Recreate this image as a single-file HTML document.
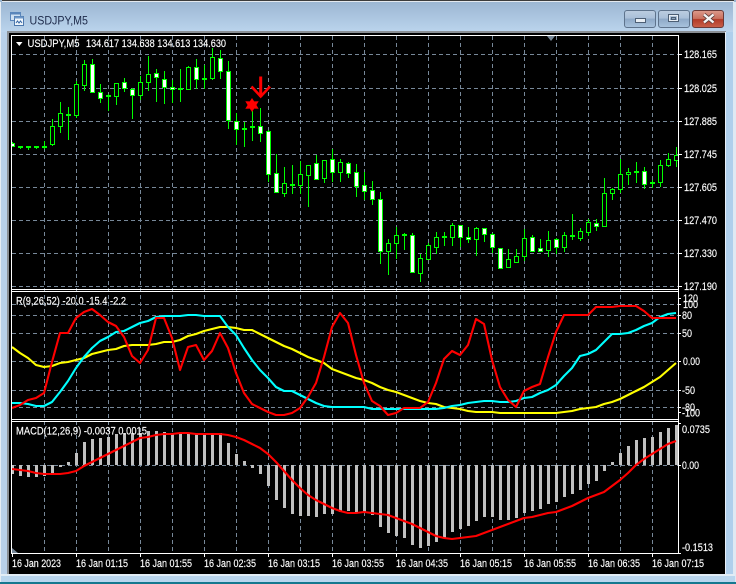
<!DOCTYPE html>
<html><head><meta charset="utf-8"><title>USDJPY,M5</title>
<style>
html,body{margin:0;padding:0;background:#000;width:736px;height:584px;overflow:hidden}
svg{display:block;position:absolute;left:0;top:0}
text{font-family:"Liberation Sans",sans-serif;font-size:11px;fill:#fff;stroke:#fff;stroke-width:.15px}
</style></head><body>
<svg width="736" height="584" viewBox="0 0 736 584" xmlns="http://www.w3.org/2000/svg">
<defs>
<linearGradient id="tb" x1="0" y1="0" x2="0" y2="1"><stop offset="0" stop-color="#9ab5d1"/><stop offset="1" stop-color="#bbd4ed"/></linearGradient>
<linearGradient id="btn" x1="0" y1="0" x2="0" y2="1"><stop offset="0" stop-color="#bccde0"/><stop offset=".45" stop-color="#a9bfd8"/><stop offset=".5" stop-color="#8ea9c7"/><stop offset="1" stop-color="#a9c3de"/></linearGradient>
<linearGradient id="cls" x1="0" y1="0" x2="0" y2="1"><stop offset="0" stop-color="#dc9a8c"/><stop offset=".48" stop-color="#c9705e"/><stop offset=".52" stop-color="#b23a28"/><stop offset="1" stop-color="#c9604a"/></linearGradient>
<clipPath id="ch"><rect x="12" y="36" width="666" height="517"/></clipPath>
</defs>
<!-- frame -->
<rect x="0" y="0" width="736" height="584" fill="#c9dcee"/>
<rect x="0" y="0" width="736" height="32" fill="url(#tb)"/>
<rect x="2" y="0" width="732" height="1" fill="#3c3c3c"/>
<rect x="2" y="1" width="732" height="1" fill="#e4e9ef"/>
<rect x="0" y="2" width="1" height="580" fill="#e6edf4"/>
<rect x="1" y="32" width="6" height="550" fill="#b9d1ea"/>
<rect x="726" y="32" width="7" height="550" fill="#afcfec"/>
<rect x="733" y="2" width="3" height="580" fill="#dfe9f3"/>
<rect x="7" y="31" width="719" height="2" fill="#8a8f95"/>
<rect x="7" y="31" width="2" height="543" fill="#8a8f95"/>
<rect x="9" y="33" width="716" height="541" fill="#000"/>
<rect x="725" y="32" width="1" height="543" fill="#e8f0f8"/>
<rect x="1" y="574" width="734" height="2" fill="#e2edf6"/>
<rect x="1" y="576" width="734" height="6" fill="#b9d6ee"/>
<rect x="0" y="582" width="736" height="2" fill="#15788f"/>
<!-- title -->
<g shape-rendering="crispEdges">
<rect x="10.500" y="12.500" width="10" height="8" fill="#cfe0f2" stroke="#5a86bb"/>
<rect x="10.500" y="12.500" width="10" height="2" fill="#5a86bb"/>
<rect x="14.500" y="16.500" width="9" height="9" fill="#eef5fb" stroke="#4d78ad"/>
<rect x="14.500" y="16.500" width="9" height="2" fill="#6d97c8"/>
</g>
<path d="M16 23l1.500-2 1.500 2 1.500-2 1.500 2" fill="none" stroke="#3567a5"/>
<text x="29.500" y="24.500" textLength="58.500" lengthAdjust="spacingAndGlyphs" style="font-size:12px;fill:#1d2a4a;stroke:none">USDJPY,M5</text>
<!-- buttons -->
<rect x="624.500" y="10.500" width="31" height="17" rx="2.500" fill="url(#btn)" stroke="#5e738c"/>
<rect x="635.500" y="18.500" width="10" height="4" fill="#e8eef4" stroke="#4d5f75"/>
<rect x="658.500" y="10.500" width="31" height="17" rx="2.500" fill="url(#btn)" stroke="#5e738c"/>
<rect x="668.500" y="14.500" width="10" height="7" fill="none" stroke="#4d5f75" stroke-width="1"/>
<rect x="669.500" y="15.500" width="8" height="5" fill="none" stroke="#e8eef4"/>
<rect x="671.500" y="17.500" width="4" height="2" fill="#8ca3bc" stroke="#4d5f75"/>
<rect x="692.500" y="10.500" width="31" height="17" rx="2.500" fill="url(#cls)" stroke="#6b3a38"/>
<path d="M704 14.500l9.500 8M713.500 14.500l-9.500 8" stroke="#5b3a38" stroke-width="4"/>
<path d="M704 14.500l9.500 8M713.500 14.500l-9.500 8" stroke="#f4f4f4" stroke-width="2.400"/>

<!-- grid -->
<g stroke="#778899" stroke-width="1" shape-rendering="crispEdges" fill="none" stroke-dasharray="4 3">
<path d="M44.500 36V553M76.500 36V553M108.500 36V553M140.500 36V553M172.500 36V553M204.500 36V553M236.500 36V553M268.500 36V553M300.500 36V553M332.500 36V553M364.500 36V553M396.500 36V553M428.500 36V553M460.500 36V553M492.500 36V553M524.500 36V553M556.500 36V553M588.500 36V553M620.500 36V553M652.500 36V553"/>
<path d="M12 54.500H678M12 88.500H678M12 121.500H678M12 154.500H678M12 187.500H678M12 220.500H678M12 253.500H678M12 286.500H678M12 304.500H678M12 315.500H678M12 333.500H678M12 361.500H678M12 390.500H678M12 407.500H678M12 465.500H678"/>
</g>
<g clip-path="url(#ch)">
<!-- candles -->
<g shape-rendering="crispEdges">
<path fill="none" stroke="#0f0" d="M12.500 142V147M20.500 147V149M28.500 147V150M36.500 147V149M44.500 141V149M52.500 119V146M60.500 102V133M68.500 107V140M76.500 81V118M84.500 60V91M92.500 59V92M100.500 84V103M108.500 94V111M116.500 84V105M124.500 78V92M132.500 88V119M140.500 76V100M148.500 56V91M156.500 69V102M164.500 71V104M172.500 80V103M180.500 69V102M188.500 66V90M196.500 59V89M204.500 65V89M212.500 48V80M220.500 50V79M228.500 61V129M236.500 113V145M244.500 122V147M252.500 111V141M260.500 108V142M268.500 130V182M276.500 154V192M284.500 167V197M292.500 165V194M300.500 161V194M308.500 165V207M316.500 155V179M324.500 160V183M332.500 149V182M340.500 159V182M348.500 162V178M356.500 164V197M364.500 172V200M372.500 181V205M380.500 192V264M388.500 239V275M396.500 227V259M404.500 233V250M412.500 233V272M420.500 254V282M428.500 243V259M436.500 232V254M444.500 232V246M452.500 223V246M460.500 225V247M468.500 227V243M476.500 227V256M484.500 228V242M492.500 233V253M500.500 248V268M508.500 249V267M516.500 249V262M524.500 229V261M532.500 235V251M540.500 239V251M548.500 231V257M556.500 238V254M564.500 232V252M572.500 214V240M580.500 228V241M588.500 219V236M596.500 219V231M604.500 178V226M612.500 188V200M620.500 159V193M628.500 168V185M636.500 162V183M644.500 167V189M652.500 180V188M660.500 160V187M668.500 153V167M676.500 147V167"/>
<path fill="#000" stroke="#0f0" d="M50.500 126.500h4v18h-4zM58.500 113.500h4v13h-4zM74.500 84.500h4v31h-4zM82.500 64.500h4v21h-4zM114.500 83.500h4v13h-4zM138.500 82.500h4v13h-4zM146.500 74.500h4v8h-4zM186.500 67.500h4v22h-4zM210.500 57.500h4v21h-4zM282.500 183.500h4v10h-4zM298.500 174.500h4v11h-4zM306.500 165.500h4v10h-4zM322.500 160.500h4v18h-4zM338.500 162.500h4v10h-4zM386.500 243.500h4v8h-4zM394.500 235.500h4v8h-4zM418.500 258.500h4v15h-4zM426.500 245.500h4v14h-4zM434.500 237.500h4v10h-4zM450.500 225.500h4v12h-4zM474.500 228.500h4v11h-4zM506.500 259.500h4v8h-4zM514.500 256.500h4v6h-4zM522.500 238.500h4v18h-4zM546.500 240.500h4v10h-4zM562.500 235.500h4v12h-4zM578.500 231.500h4v7h-4zM586.500 222.500h4v10h-4zM602.500 193.500h4v33h-4zM610.500 189.500h4v4h-4zM618.500 174.500h4v15h-4zM626.500 172.500h4v2h-4zM658.500 165.500h4v17h-4zM666.500 159.500h4v6h-4zM674.500 155.500h4v5h-4z"/>
<path fill="#fff" stroke="#0f0" d="M10.500 143.500h4v3h-4zM90.500 64.500h4v28h-4zM98.500 92.500h4v6h-4zM122.500 82.500h4v6h-4zM130.500 89.500h4v6h-4zM154.500 73.500h4v4h-4zM162.500 79.500h4v8h-4zM170.500 87.500h4v2h-4zM194.500 67.500h4v12h-4zM218.500 58.500h4v13h-4zM226.500 71.500h4v49h-4zM234.500 121.500h4v8h-4zM258.500 126.500h4v7h-4zM266.500 131.500h4v43h-4zM274.500 173.500h4v19h-4zM314.500 163.500h4v16h-4zM330.500 159.500h4v13h-4zM346.500 163.500h4v10h-4zM354.500 172.500h4v14h-4zM362.500 185.500h4v6h-4zM370.500 190.500h4v9h-4zM378.500 199.500h4v52h-4zM410.500 235.500h4v37h-4zM458.500 225.500h4v12h-4zM466.500 237.500h4v2h-4zM482.500 228.500h4v6h-4zM490.500 234.500h4v13h-4zM498.500 248.500h4v20h-4zM530.500 237.500h4v14h-4zM538.500 248.500h4v3h-4zM554.500 239.500h4v8h-4zM594.500 223.500h4v3h-4zM642.500 171.500h4v13h-4z"/>
<path fill="#0f0" d="M18 146h5v2h-5zM26 146h5v2h-5zM34 146h5v2h-5zM42 146h5v2h-5zM66 114h5v2h-5zM106 95h5v2h-5zM178 88h5v2h-5zM202 78h5v2h-5zM242 128h5v2h-5zM250 126h5v2h-5zM290 184h5v2h-5zM402 234h5v2h-5zM442 236h5v2h-5zM570 235h5v2h-5zM634 171h5v2h-5zM650 182h5v2h-5z"/>
</g>
<!-- MACD bars -->
<path shape-rendering="crispEdges" fill="none" stroke="#c0c0c0" stroke-width="3" d="M12.500 465V474M20.500 465V476M28.500 465V477M36.500 465V477M44.500 465V476M52.500 465V473M60.500 465V467M68.500 465V462M76.500 465V453M84.500 465V442M92.500 465V439M100.500 465V438M108.500 465V437M116.500 465V434M124.500 465V433M132.500 465V433M140.500 465V433M148.500 465V431M156.500 465V431M164.500 465V432M172.500 465V433M180.500 465V433M188.500 465V433M196.500 465V433M204.500 465V433M212.500 465V433M220.500 465V433M228.500 465V443M236.500 465V454M244.500 465V461M252.500 465V468M260.500 465V474M268.500 465V486M276.500 465V500M284.500 465V508M292.500 465V514M300.500 465V516M308.500 465V516M316.500 465V517M324.500 465V514M332.500 465V514M340.500 465V512M348.500 465V511M356.500 465V513M364.500 465V513M372.500 465V515M380.500 465V527M388.500 465V533M396.500 465V536M404.500 465V538M412.500 465V545M420.500 465V548M428.500 465V546M436.500 465V542M444.500 465V538M452.500 465V532M460.500 465V529M468.500 465V526M476.500 465V521M484.500 465V517M492.500 465V517M500.500 465V520M508.500 465V520M516.500 465V518M524.500 465V513M532.500 465V511M540.500 465V509M548.500 465V504M556.500 465V502M564.500 465V497M572.500 465V494M580.500 465V490M588.500 465V484M596.500 465V481M604.500 465V471M612.500 465V462M620.500 465V453M628.500 465V446M636.500 465V440M644.500 465V438M652.500 465V437M660.500 465V432M668.500 465V428M676.500 465V425"/>
<!-- indicator lines -->
<g fill="none" stroke-width="2.100" stroke-linejoin="round">
<polyline stroke="#ff0" points="12,347 20,353 28,358 36,365 44,367 52,366 60,363 68,362 76,360 84,358 92,354 100,352 108,350 116,349 124,346 132,345 140,345 148,345 156,344 164,342 172,342 180,340 188,336 196,334 204,331 212,329 220,327 228,327 236,328 244,330 252,330 260,334 268,338 276,342 284,346 292,349 300,353 308,357 316,360 324,363 332,369 340,372 348,375 356,378 364,380 372,383 380,387 388,390 396,392 404,395 412,398 420,401 428,403 436,404 444,407 452,408 460,409 468,411 476,412 484,412 492,412 500,413 508,413 516,413 524,413 532,413 540,413 548,413 556,413 564,412 572,411 580,409 588,408 596,407 604,404 612,402 620,399 628,395 636,391 644,387 652,382 660,377 668,370 676,363"/>
<polyline stroke="#0ff" points="12,403 20,403 28,404 36,406 44,406 52,402 60,392 68,381 76,368 84,357 92,348 100,341 108,337 116,332 124,331 132,327 140,323 148,321 156,317 164,316 172,316 180,316 188,315 196,315 204,316 212,316 220,316 228,327 236,335 244,348 252,360 260,370 268,378 276,387 284,391 292,391 300,395 308,399 316,403 324,406 332,407 340,407 348,407 356,407 364,407 372,409 380,409 388,409 396,409 404,409 412,409 420,409 428,409 436,409 444,408 452,406 460,405 468,403 476,402 484,401 492,401 500,402 508,402 516,401 524,398 532,397 540,393 548,390 556,385 564,376 572,368 580,356 588,354 596,350 604,342 612,334 620,334 628,333 636,330 644,326 652,323 660,317 668,314 676,313"/>
<polyline stroke="#f00" points="12,408 20,405 28,400 36,398 44,393 52,362 60,333 68,333 76,318 84,312 92,309 100,315 108,322 116,326 124,337 132,356 140,363 148,350 156,318 164,318 172,338 180,370 188,347 196,345 204,360 212,351 220,333 228,348 236,373 244,393 252,404 260,408 268,412 276,415 284,415 292,413 300,408 308,397 316,383 324,357 332,327 340,313 348,323 356,355 364,383 372,401 380,406 388,415 396,413 404,408 412,408 420,408 428,402 436,383 444,359 452,351 460,355 468,345 476,319 484,324 492,360 500,387 508,400 516,407 524,391 532,387 540,384 548,357 556,332 564,315 572,315 580,315 588,315 596,307 604,307 612,307 620,306 628,306 636,306 644,311 652,318 660,318 668,318 676,318"/>
<polyline stroke="#f00" points="12,469 20,470 28,471 36,473 44,474 52,474 60,474 68,473 76,471 84,466 92,462 100,458 108,454 116,450 124,446 132,442 140,438 148,437 156,435 164,434 172,434 180,433 188,433 196,434 204,434 212,434 220,434 228,435 236,437 244,440 252,444 260,448 268,454 276,462 284,471 292,480 300,488 308,495 316,500 324,504 332,508 340,511 348,513 356,513 364,512 372,513 380,514 388,515 396,518 404,521 412,524 420,528 428,532 436,536 444,538 452,539 460,538 468,537 476,536 484,533 492,530 500,527 508,524 516,521 524,518 532,517 540,515 548,513 556,512 564,509 572,506 580,502 588,498 596,495 604,492 612,486 620,480 628,473 636,465 644,459 652,454 660,449 668,444 676,441"/>
</g>
<!-- gray triangles -->
<path d="M547 36h8l-4 5z" fill="#778899"/>
<path d="M12 548l6 5h-6z" fill="#778899"/>
<!-- arrow & star -->
<path d="M260.700 76.500V97" stroke="#f00" stroke-width="3" fill="none"/>
<path d="M251.500 86.500l9.200 10 9.300-10" stroke="#f00" stroke-width="2.600" fill="none"/>
<path d="M252 98l2.200 3.400 4.500-.1-2.300 3.700 2.300 3.700-4.500-.1-2.200 3.400-2.200-3.400-4.500.1 2.300-3.700-2.300-3.700 4.500.1z" fill="#f00"/>
</g>
<!-- borders -->
<g shape-rendering="crispEdges" fill="none" stroke="#fff">
<path d="M11.500 35.500H678.500V553.500H11.500z"/>
<path d="M12 289.500H678M12 291.500H678M12 419.500H678M12 421.500H678"/>
<path d="M679 54.500h3M679 88.500h3M679 121.500h3M679 154.500h3M679 187.500h3M679 220.500h3M679 253.500h3M679 286.500h3M679 298.500h2M679 304.500h2M679 315.500h2M679 333.500h2M679 361.500h2M679 390.500h2M679 407.500h2M679 412.500h2M679 423.500h2M679 465.500h2M679 553.500h2"/>
<path d="M12.500 554v3M76.500 554v3M140.500 554v3M204.500 554v3M268.500 554v3M332.500 554v3M396.500 554v3M460.500 554v3M524.500 554v3M588.500 554v3M652.500 554v3"/>
</g>
<path d="M16 42h6.500l-3.200 4z" fill="#fff"/>
<!-- chart text -->
<text x="27.500" y="47" textLength="52" lengthAdjust="spacingAndGlyphs">USDJPY,M5</text>
<text x="86" y="47" textLength="140" lengthAdjust="spacingAndGlyphs">134.617 134.638 134.613 134.630</text>
<text x="16" y="304.500" textLength="110" lengthAdjust="spacingAndGlyphs">R(9,26,52) -20.0 -15.4 -2.2</text>
<text x="16" y="434.500" textLength="131" lengthAdjust="spacingAndGlyphs">MACD(12,26,9) -0.0037 0.0015</text>
<g>
<text x="684" y="58" textLength="33" lengthAdjust="spacingAndGlyphs">128.165</text>
<text x="684" y="92" textLength="33" lengthAdjust="spacingAndGlyphs">128.025</text>
<text x="684" y="125" textLength="33" lengthAdjust="spacingAndGlyphs">127.885</text>
<text x="684" y="158" textLength="33" lengthAdjust="spacingAndGlyphs">127.745</text>
<text x="684" y="191" textLength="33" lengthAdjust="spacingAndGlyphs">127.605</text>
<text x="684" y="224" textLength="33" lengthAdjust="spacingAndGlyphs">127.470</text>
<text x="684" y="257" textLength="33" lengthAdjust="spacingAndGlyphs">127.330</text>
<text x="684" y="290" textLength="33" lengthAdjust="spacingAndGlyphs">127.190</text>
<text x="683" y="302" textLength="15" lengthAdjust="spacingAndGlyphs">120</text>
<text x="683" y="308" textLength="15" lengthAdjust="spacingAndGlyphs">100</text>
<text x="682" y="319" textLength="10" lengthAdjust="spacingAndGlyphs">80</text>
<text x="682" y="337" textLength="10" lengthAdjust="spacingAndGlyphs">50</text>
<text x="683" y="365" textLength="17" lengthAdjust="spacingAndGlyphs">0.00</text>
<text x="682" y="394" textLength="13" lengthAdjust="spacingAndGlyphs">-50</text>
<text x="682" y="411" textLength="13" lengthAdjust="spacingAndGlyphs">-80</text>
<text x="682" y="416.500" textLength="18" lengthAdjust="spacingAndGlyphs">-100</text>
<text x="682" y="433" textLength="28" lengthAdjust="spacingAndGlyphs">0.0735</text>
<text x="682" y="469" textLength="17" lengthAdjust="spacingAndGlyphs">0.00</text>
<text x="682" y="551" textLength="31" lengthAdjust="spacingAndGlyphs">-0.1513</text>
</g>
<g>
<text x="12" y="567" textLength="49" lengthAdjust="spacingAndGlyphs">16 Jan 2023</text>
<text x="76" y="567" textLength="52" lengthAdjust="spacingAndGlyphs">16 Jan 01:15</text>
<text x="140" y="567" textLength="52" lengthAdjust="spacingAndGlyphs">16 Jan 01:55</text>
<text x="204" y="567" textLength="52" lengthAdjust="spacingAndGlyphs">16 Jan 02:35</text>
<text x="268" y="567" textLength="52" lengthAdjust="spacingAndGlyphs">16 Jan 03:15</text>
<text x="332" y="567" textLength="52" lengthAdjust="spacingAndGlyphs">16 Jan 03:55</text>
<text x="396" y="567" textLength="52" lengthAdjust="spacingAndGlyphs">16 Jan 04:35</text>
<text x="460" y="567" textLength="52" lengthAdjust="spacingAndGlyphs">16 Jan 05:15</text>
<text x="524" y="567" textLength="52" lengthAdjust="spacingAndGlyphs">16 Jan 05:55</text>
<text x="588" y="567" textLength="52" lengthAdjust="spacingAndGlyphs">16 Jan 06:35</text>
<text x="652" y="567" textLength="52" lengthAdjust="spacingAndGlyphs">16 Jan 07:15</text>
</g>
</svg>
</body></html>
